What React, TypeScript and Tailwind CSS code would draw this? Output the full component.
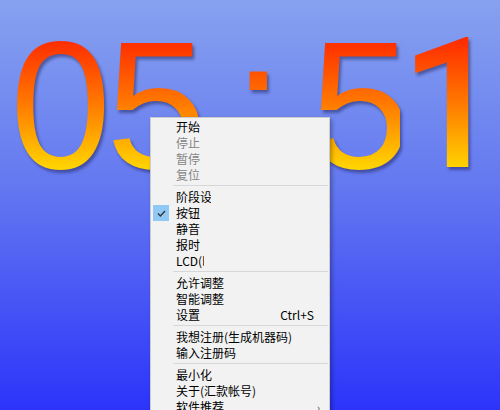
import React from "react";

type Item =
  | { kind: "sep" }
  | {
      kind: "item";
      label: string;
      disabled?: boolean;
      checked?: boolean;
      shortcut?: string;
      sub?: boolean;
      clip?: string;
    };

const items: Item[] = [
  { kind: "item", label: "开始" },
  { kind: "item", label: "停止", disabled: true },
  { kind: "item", label: "暂停", disabled: true },
  { kind: "item", label: "复位", disabled: true },
  { kind: "sep" },
  { kind: "item", label: "阶段设置", clip: "w-[35px]" },
  { kind: "item", label: "按钮", checked: true },
  { kind: "item", label: "静音" },
  { kind: "item", label: "报时" },
  { kind: "item", label: "LCD(时钟)", clip: "w-[28px]" },
  { kind: "sep" },
  { kind: "item", label: "允许调整" },
  { kind: "item", label: "智能调整" },
  { kind: "item", label: "设置", shortcut: "Ctrl+S" },
  { kind: "sep" },
  { kind: "item", label: "我想注册(生成机器码)" },
  { kind: "item", label: "输入注册码" },
  { kind: "sep" },
  { kind: "item", label: "最小化" },
  { kind: "item", label: "关于(汇款帐号)" },
  { kind: "item", label: "软件推荐", sub: true },
];

const digitClass =
  "inline-block leading-none text-transparent bg-clip-text bg-[linear-gradient(to_bottom,#ff2a00_24px,#ff7a00_90px,#ffd400_154px)]";

export default function App() {
  return (
    <div className="relative w-[500px] h-[410px] overflow-hidden bg-[linear-gradient(to_bottom,#86a2ef,#6478f0_45%,#2c34fa)]">
      <div className="flex pt-[14px] pl-[10px] text-[182px] font-['Liberation_Sans',Arial,sans-serif] drop-shadow-[2px_3px_1.5px_rgba(20,20,70,0.45)]">
        <span className={`${digitClass} w-[96px]`}>0</span>
        <span className={`${digitClass} w-[127px]`}>5</span>
        <span className={`${digitClass} w-[77px]`}>:</span>
        <span className={`${digitClass} w-[90px]`}>5</span>
        <span className={`${digitClass} w-[97px] font-['Roboto',sans-serif] font-medium`}>1</span>
      </div>

      <div className="absolute left-[150px] top-[117px] w-[180px] h-[320px] bg-[#f2f2f2] border border-[#cccccc] shadow-[2px_2px_4px_rgba(0,0,0,0.3)] pt-[1px] font-['Noto_Sans_CJK_SC','Noto_Sans',sans-serif] text-[12px]">
        {items.map((it, i) =>
          it.kind === "sep" ? (
            <div key={i} className="h-[6px] pt-[2px] pl-[22px] pr-[1px]">
              <div className="h-px bg-[#d7d7d7]" />
            </div>
          ) : (
            <div key={i} className="relative h-[16px] flex items-center">
              {it.checked && (
                <div className="absolute left-[2px] top-0 w-[16px] h-[16px] bg-[#90c8f6] flex items-center justify-center">
                  <svg width="9" height="7" viewBox="0 0 9 7">
                    <path d="M1 3.5 L3.4 6 L8 1" fill="none" stroke="#333" strokeWidth="1.3" />
                  </svg>
                </div>
              )}
              <span
                className={`ml-[25px] leading-[16px] whitespace-nowrap ${
                  it.disabled ? "text-[#858585]" : "text-black"
                } ${it.clip ? `${it.clip} overflow-hidden inline-block` : ""}`}
              >
                {it.label}
              </span>
              {it.shortcut && (
                <span className="ml-auto mr-[15px] text-black leading-[16px]">
                  {it.shortcut}
                </span>
              )}
              {it.sub && (
                <span className="ml-auto mr-[9px] text-[#555] text-[11px] leading-[16px]">
                  ›
                </span>
              )}
            </div>
          )
        )}
      </div>
    </div>
  );
}
